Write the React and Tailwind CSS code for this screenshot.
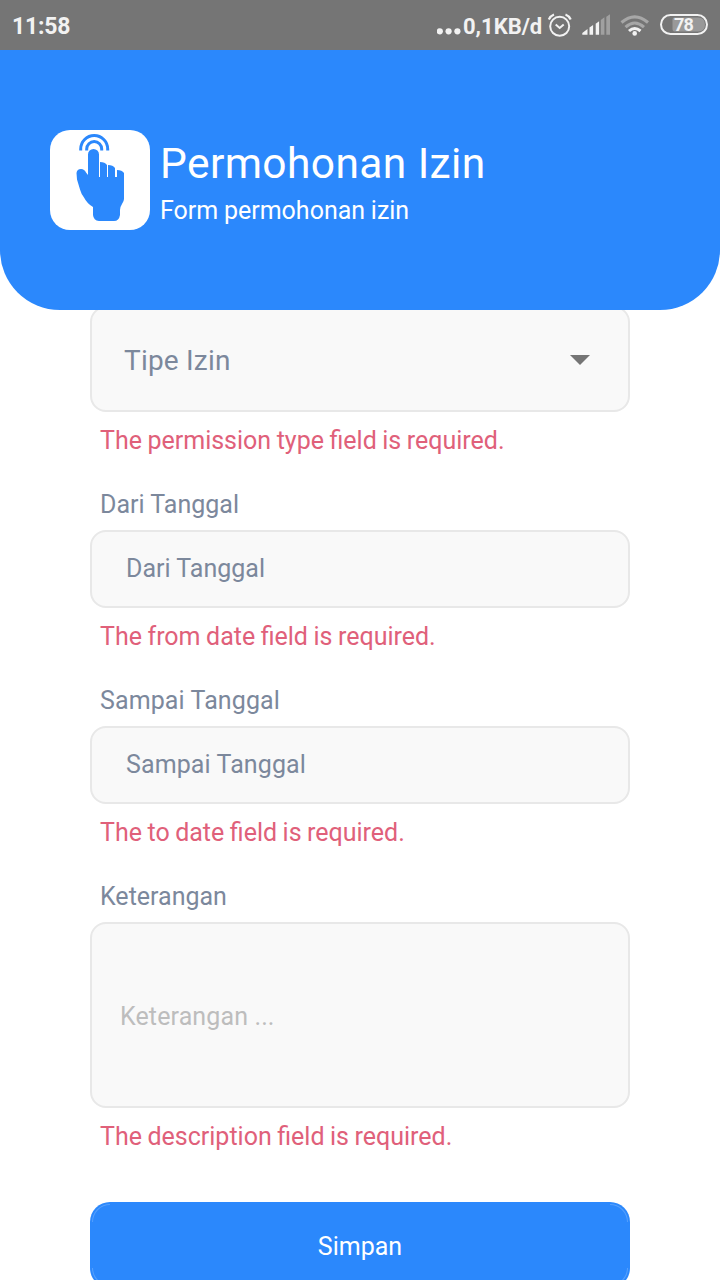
function StatusBar() {
  return (
    <div className="flex h-[50px] shrink-0 items-center bg-[#757575] px-3 text-[#f2f2f2]">
      <span className="pt-[3px] text-[23px] font-bold leading-[50px] tracking-[-0.2px]">11:58</span>
      <div className="ml-auto flex items-center">
        <svg width="26" height="50" viewBox="0 0 26 50" fill="currentColor">
          <circle cx="2.8" cy="31.3" r="3.1" />
          <circle cx="11.6" cy="31.3" r="3.1" />
          <circle cx="20.4" cy="31.3" r="3.1" />
        </svg>
        <span className="w-[83px] whitespace-nowrap pt-[3px] text-[22px] font-bold leading-[47px]">0,1KB/d</span>
        <svg width="162" height="50" viewBox="546 0 162 50" fill="none" stroke="currentColor">
          <circle cx="559.7" cy="26.3" r="9.5" strokeWidth="2" />
          <path d="M555.7 24.5l4 3.5 4-3.5" strokeWidth="2" />
          <path d="M548.8 19.5q1.7-3.7 5.2-5M565.5 14.5q3.5 1.3 5.2 5" strokeWidth="2.2" />
          <g fill="currentColor" stroke="none">
            <path d="M582.3 34.7v-1.8l5.2-3.8v5.6zM589.5 27.5l3.6-2.6v9.8h-3.6zM595.7 23.8l3.4-2.5v13.4h-3.4z" />
            <path d="M600.8 20l3.6-2.7v17.4h-3.6zM606.3 16.8l3.7-2.5v20.4h-3.7z" opacity=".35" />
          </g>
          <g strokeWidth="3">
            <path d="M621.5 22.5q13.2-11.3 26.5 0M625.5 27.2q9.2-8.3 18.5 0" opacity=".4" />
            <path d="M629 31q5.7-5.1 11.5 0" />
            <circle cx="634.7" cy="33.4" r="2.3" fill="currentColor" stroke="none" />
          </g>
          <rect x="661" y="15" width="46" height="19" rx="9.5" strokeWidth="2" />
          <path d="M674.5 17.5H698q7 0 7 7t-7 7h-23.5q-2 0-2-2v-10q0-2 2-2z" fill="#999" stroke="none" />
          <text x="683.5" y="31" textAnchor="middle" fill="currentColor" stroke="none" className="font-['Roboto',sans-serif] text-[18px] font-bold tracking-[-0.8px]">78</text>
        </svg>
      </div>
    </div>
  );
}

function TouchIcon() {
  return (
    <svg className="shrink-0 rounded-[20px] bg-white" width="100" height="100" viewBox="0 0 100 100">
      <path
        fill="#2b88fc"
        d="M38 45V24.500a5.500 5.500 0 0 1 11 0V47h1V32q5 0 7 3v12h1V35q5 0 7 3v9h2v-7q5 0 7 3v26q0 2-2 5-2 3-2 6v5q-1 6-6 6H49q-5.500-.5-6-6v-8q-6-3.500-9-9.500-3-4-4-8l-3-10-.5-6.500q.5-4 4.500-4 3.500 0 5 3.500z"
      />
      <path d="M30.700 20.500V19a13.500 13.500 0 0 1 27 0v1.500M36.700 20.500V19a7.500 7.500 0 0 1 15 0v1.500" fill="none" stroke="#2b88fc" strokeWidth="3" />
    </svg>
  );
}

function FieldError({ children }) {
  return (
    <p className="mt-[13px] ml-[10px] h-8 whitespace-nowrap text-[25px] leading-8 text-[#e0607a] [word-spacing:-0.7px]">
      {children}
    </p>
  );
}

function Label({ children, className = "" }) {
  return (
    <label className={`mt-8 ml-[10px] mb-[9px] h-8 whitespace-nowrap text-[25px] leading-8 text-[#7c889c] ${className}`}>
      {children}
    </label>
  );
}

const box = "flex shrink-0 items-center rounded-2xl border-2 border-[#e8e8e8] bg-[#f9f9f9] text-[#7c889c]";

export default function App() {
  return (
    <div className="flex h-[1280px] w-[720px] flex-col overflow-hidden bg-white font-['Roboto',sans-serif]">
      <StatusBar />
      <header className="z-10 flex h-[260px] shrink-0 items-center gap-[10px] rounded-b-[60px] bg-[#2b88fc] pl-[50px] text-white">
        <TouchIcon />
        <div className="pt-[3px]">
          <h1 className="whitespace-nowrap text-[42.5px] leading-[56px] tracking-[0.4px]">Permohonan Izin</h1>
          <p className="mt-[3px] whitespace-nowrap text-[25px] leading-8 [word-spacing:-0.5px]">Form permohonan izin</p>
        </div>
      </header>
      <main className="-mt-1 flex flex-col px-[90px]">
        <div className={`${box} h-[106px] justify-between pl-8 pr-[38px] pt-[2px] text-[28px] tracking-[0.2px]`}>
          <span className="pt-[2px]">Tipe Izin</span>
          <svg width="20" height="10" viewBox="0 0 20 10" fill="#757575">
            <path d="M0 0h20L10 10z" />
          </svg>
        </div>
        <FieldError>The permission type field is required.</FieldError>
        <Label>Dari Tanggal</Label>
        <div className={`${box} h-[78px] pl-[34px] text-[25px]`}>Dari Tanggal</div>
        <FieldError>The from date field is required.</FieldError>
        <Label className="tracking-[0.1px]">Sampai Tanggal</Label>
        <div className={`${box} h-[78px] pl-[34px] text-[25px] tracking-[0.1px]`}>Sampai Tanggal</div>
        <FieldError>The to date field is required.</FieldError>
        <Label>Keterangan</Label>
        <textarea
          className="h-[186px] shrink-0 resize-none rounded-2xl border-2 border-[#e8e8e8] bg-[#f9f9f9] px-7 pt-[77px] text-[25px] leading-8 tracking-[0.12px] placeholder:text-[#bdbdbd]"
          placeholder="Keterangan ..."
        />
        <FieldError>The description field is required.</FieldError>
        <button className="relative mt-[49px] h-[86px] shrink-0 rounded-[20px] bg-[#2b88fc] pt-1 text-[25px] text-white">
          Simpan
          <span className="absolute left-[2px] top-[2px] size-[18px] rounded-tl-[18px] border-l border-t border-white/20" />
          <span className="absolute right-[2px] top-[2px] size-[18px] rounded-tr-[18px] border-r border-t border-white/20" />
          <span className="absolute bottom-[2px] left-[2px] size-[18px] rounded-bl-[18px] border-b border-l border-white/20" />
          <span className="absolute bottom-[2px] right-[2px] size-[18px] rounded-br-[18px] border-b border-r border-white/20" />
        </button>
      </main>
    </div>
  );
}
